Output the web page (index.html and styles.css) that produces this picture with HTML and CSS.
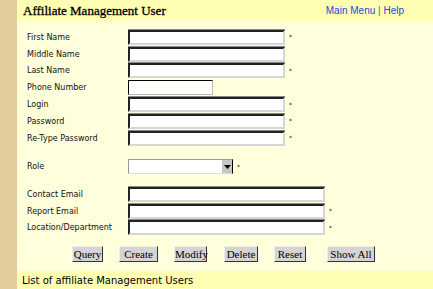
FILE: index.html
```html
<!DOCTYPE html>
<html lang="en">
<head>
  <meta charset="UTF-8" />
  <title>Affiliate Management User</title>
  <link rel="stylesheet" href="styles.css">
</head>
<body>
  <div class="sidebar"></div>
  <div class="main">
    <div class="header">
      <h1>Affiliate Management User</h1>
      <div class="links"><a href="#">Main Menu</a> <span class="sep">|</span> <a href="#">Help</a></div>
    </div>

    <form class="user-form">
      <div class="group">
        <div class="row"><label>First Name</label><input type="text" class="long" /><span class="req">*</span></div>
        <div class="row"><label>Middle Name</label><input type="text" class="long" /></div>
        <div class="row"><label>Last Name</label><input type="text" class="long" /><span class="req">*</span></div>
        <div class="row"><label>Phone Number</label><input type="text" class="short" /></div>
        <div class="row"><label>Login</label><input type="text" class="long" /><span class="req">*</span></div>
        <div class="row"><label>Password</label><input type="password" class="long" /><span class="req">*</span></div>
        <div class="row"><label>Re-Type Password</label><input type="password" class="long" /><span class="req">*</span></div>
      </div>

      <div class="row role-row">
        <label>Role</label>
        <div class="select"><span class="arrow"><svg width="7" height="4" viewBox="0 0 7 4"><path d="M0 0H7L3.5 4Z" fill="#000"/></svg></span></div>
        <span class="req">*</span>
      </div>

      <div class="group email-group">
        <div class="row"><label>Contact Email</label><input type="text" class="wide" /></div>
        <div class="row"><label>Report Email</label><input type="text" class="wide" /><span class="req">*</span></div>
        <div class="row"><label>Location/Department</label><input type="text" class="wide" /><span class="req">*</span></div>
      </div>

      <div class="buttons">
        <button type="button" class="b-query">Query</button>
        <button type="button" class="b-create">Create</button>
        <button type="button" class="b-modify">Modify</button>
        <button type="button" class="b-delete">Delete</button>
        <button type="button" class="b-reset">Reset</button>
        <button type="button" class="b-show">Show All</button>
      </div>
    </form>

    <div class="footer">List of affiliate Management Users</div>
  </div>
</body>
</html>
```

FILE: styles.css
```css
body {
  margin: 0;
  display: flex;
  height: 289px;
  overflow: hidden;
  background: #ffffdc;
  font-family: "DejaVu Sans", Verdana, sans-serif;
}

.sidebar {
  width: 17px;
  flex-shrink: 0;
  background: #e0cc9d;
}

.main {
  flex: 1;
  display: flex;
  flex-direction: column;
}

.header {
  height: 21px;
  background: #ffffb4;
  display: flex;
  align-items: center;
  justify-content: space-between;
  padding: 0 29px 0 6px;
}

h1 {
  margin: 0;
  font-family: "Liberation Serif", "Times New Roman", serif;
  font-size: 13px;
  font-weight: normal;
  color: #000;
  -webkit-text-stroke: 0.3px #000;
}

.links {
  font-family: "Liberation Sans", Arial, sans-serif;
  font-size: 10px;
}

.links a {
  color: #1f44e0;
  text-decoration: none;
}

.sep {
  color: #666;
}

.user-form {
  padding: 8px 0 0 10px;
}

.row {
  display: flex;
  align-items: center;
  height: 16.8px;
}

label {
  width: 101px;
  font-size: 8px;
  color: #111;
}

input {
  box-sizing: border-box;
  height: 15px;
  margin: 0;
  padding: 0;
  background: #fff;
  border: 2px solid;
  border-color: #222 #d6d6d6 #d6d6d6 #222;
  box-shadow: 0 -1px 0 #888;
}

.long {
  width: 157px;
}

.short {
  width: 85px;
  border-width: 1px;
  border-color: #000 #bbb #bbb #000;
  box-shadow: none;
}

.wide {
  width: 197px;
}

.req {
  font-size: 6px;
  margin-left: 4px;
  line-height: 1;
}

.role-row {
  margin-top: 12px;
}

.select {
  box-sizing: border-box;
  width: 105px;
  height: 15px;
  background: #fff;
  border: 1px solid #999;
  border-bottom-color: #ddd;
  border-right: 1px solid #000;
  display: flex;
  justify-content: flex-end;
}

.arrow {
  width: 10px;
  background: #c6c6c6;
  display: flex;
  align-items: center;
  justify-content: center;
}

.email-group {
  margin-top: 11px;
}

.email-group .row {
  height: 16.5px;
}

.buttons {
  display: flex;
  gap: 16px;
  margin: 10px 0 0 45px;
}

button {
  font-family: "Liberation Serif", "Times New Roman", serif;
  font-size: 11px;
  padding: 0;
  height: 16px;
  background: #d4d4d4;
  border: 1px solid;
  border-color: #eee #333 #333 #eee;
  color: #000;
}

.b-query { width: 31px; }
.b-create { width: 39px; }
.b-modify { width: 33px; }
.b-delete { width: 34px; margin-left: 1px; }
.b-reset { width: 32px; }
.b-show { width: 48px; margin-left: 5px; }

.footer {
  margin-top: auto;
  height: 18px;
  background: #ffffb4;
  font-size: 10px;
  padding-left: 5px;
  display: flex;
  align-items: center;
}
```
